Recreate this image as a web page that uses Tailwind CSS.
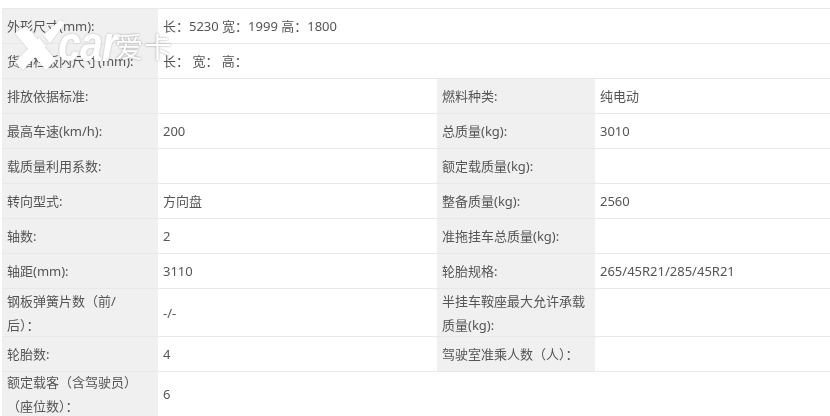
<!DOCTYPE html>
<html><head><meta charset="utf-8"><script src="https://cdn.jsdelivr.net/npm/@tailwindcss/browser@4"></script></head>
<body class="bg-white">
<div class="relative w-[830px] h-[416px] overflow-hidden bg-white pt-[8px] text-[13px] leading-[24px] text-[#555] font-['Noto_Sans','Noto_Sans_CJK_SC',sans-serif]">
<div class="blur-[0.35px] grid grid-cols-[156px_279px_158px_235px] ml-[2px] w-[828px] grid-rows-[35px_35px_35px_35px_35px_35px_35px_35px_48px_35px_45px] [&>div]:border-t [&>div]:border-[#e8e8e8] [&>div]:flex [&>div]:items-center">
<div class="bg-[#f0f0f0] pl-[5px]">外形尺寸(mm):</div><div class="col-span-3 pl-[5px]">长：5230 宽：1999 高：1800</div>
<div class="bg-[#f0f0f0] pl-[5px]">货箱栏板内尺寸(mm):</div><div class="col-span-3 pl-[5px]">长： 宽： 高：</div>
<div class="bg-[#f0f0f0] pl-[5px]">排放依据标准:</div><div></div><div class="bg-[#f0f0f0] pl-[5px]">燃料种类:</div><div class="pl-[5px]">纯电动</div>
<div class="bg-[#f0f0f0] pl-[5px]">最高车速(km/h):</div><div class="pl-[5px]">200</div><div class="bg-[#f0f0f0] pl-[5px]">总质量(kg):</div><div class="pl-[5px]">3010</div>
<div class="bg-[#f0f0f0] pl-[5px]">载质量利用系数:</div><div></div><div class="bg-[#f0f0f0] pl-[5px]">额定载质量(kg):</div><div></div>
<div class="bg-[#f0f0f0] pl-[5px]">转向型式:</div><div class="pl-[5px]">方向盘</div><div class="bg-[#f0f0f0] pl-[5px]">整备质量(kg):</div><div class="pl-[5px]">2560</div>
<div class="bg-[#f0f0f0] pl-[5px]">轴数:</div><div class="pl-[5px]">2</div><div class="bg-[#f0f0f0] pl-[5px]">准拖挂车总质量(kg):</div><div></div>
<div class="bg-[#f0f0f0] pl-[5px]">轴距(mm):</div><div class="pl-[5px]">3110</div><div class="bg-[#f0f0f0] pl-[5px]">轮胎规格:</div><div class="pl-[5px]">265/45R21/285/45R21</div>
<div class="bg-[#f0f0f0] pl-[5px] pr-[30px]"><span>钢板弹簧片数（前/后）：</span></div><div class="pl-[5px]">-/-</div><div class="bg-[#f0f0f0] pl-[5px] pr-[6px]"><span>半挂车鞍座最大允许承载质量(kg):</span></div><div></div>
<div class="bg-[#f0f0f0] pl-[5px]">轮胎数:</div><div class="pl-[5px]">4</div><div class="bg-[#f0f0f0] pl-[5px]">驾驶室准乘人数（人）：</div><div></div>
<div class="bg-[#f0f0f0] pl-[5px] pr-[14px]"><span>额定载客（含驾驶员）（座位数）：</span></div><div class="pl-[5px]">6</div><div class="col-span-2 bg-white"></div>
</div>
<div class="absolute left-[437px] right-0 top-[371px] h-[45px] bg-white border-t border-[#e8e8e8]"></div>
<svg class="absolute left-0 top-0 drop-shadow-[0_0_1px_rgba(0,0,0,0.15)]" width="70" height="76" viewBox="0 0 70 76" fill="#fff"><path d="M15 33 L26 26 L56 60 L46 70 Z"/><path d="M15 62 L39 38 L46 46 L23 70 Z"/><path d="M44 35 L60 20 L65 23 L50 43 Z"/></svg>
<div class="absolute left-[58px] top-[24px] w-[60px] h-[40px] origin-left scale-x-[0.82] text-[50px] leading-[40px] font-bold italic text-white tracking-[-1px] drop-shadow-[0_0_1px_rgba(0,0,0,0.22)] font-['Liberation_Sans',sans-serif]">car</div>
<div class="absolute left-[115px] top-[29px] text-[28px] leading-[34px] text-white tracking-[1px] drop-shadow-[0_0_1px_rgba(0,0,0,0.35)] font-['Noto_Sans_CJK_SC',sans-serif]">爱卡</div>
</div>
</body></html>
